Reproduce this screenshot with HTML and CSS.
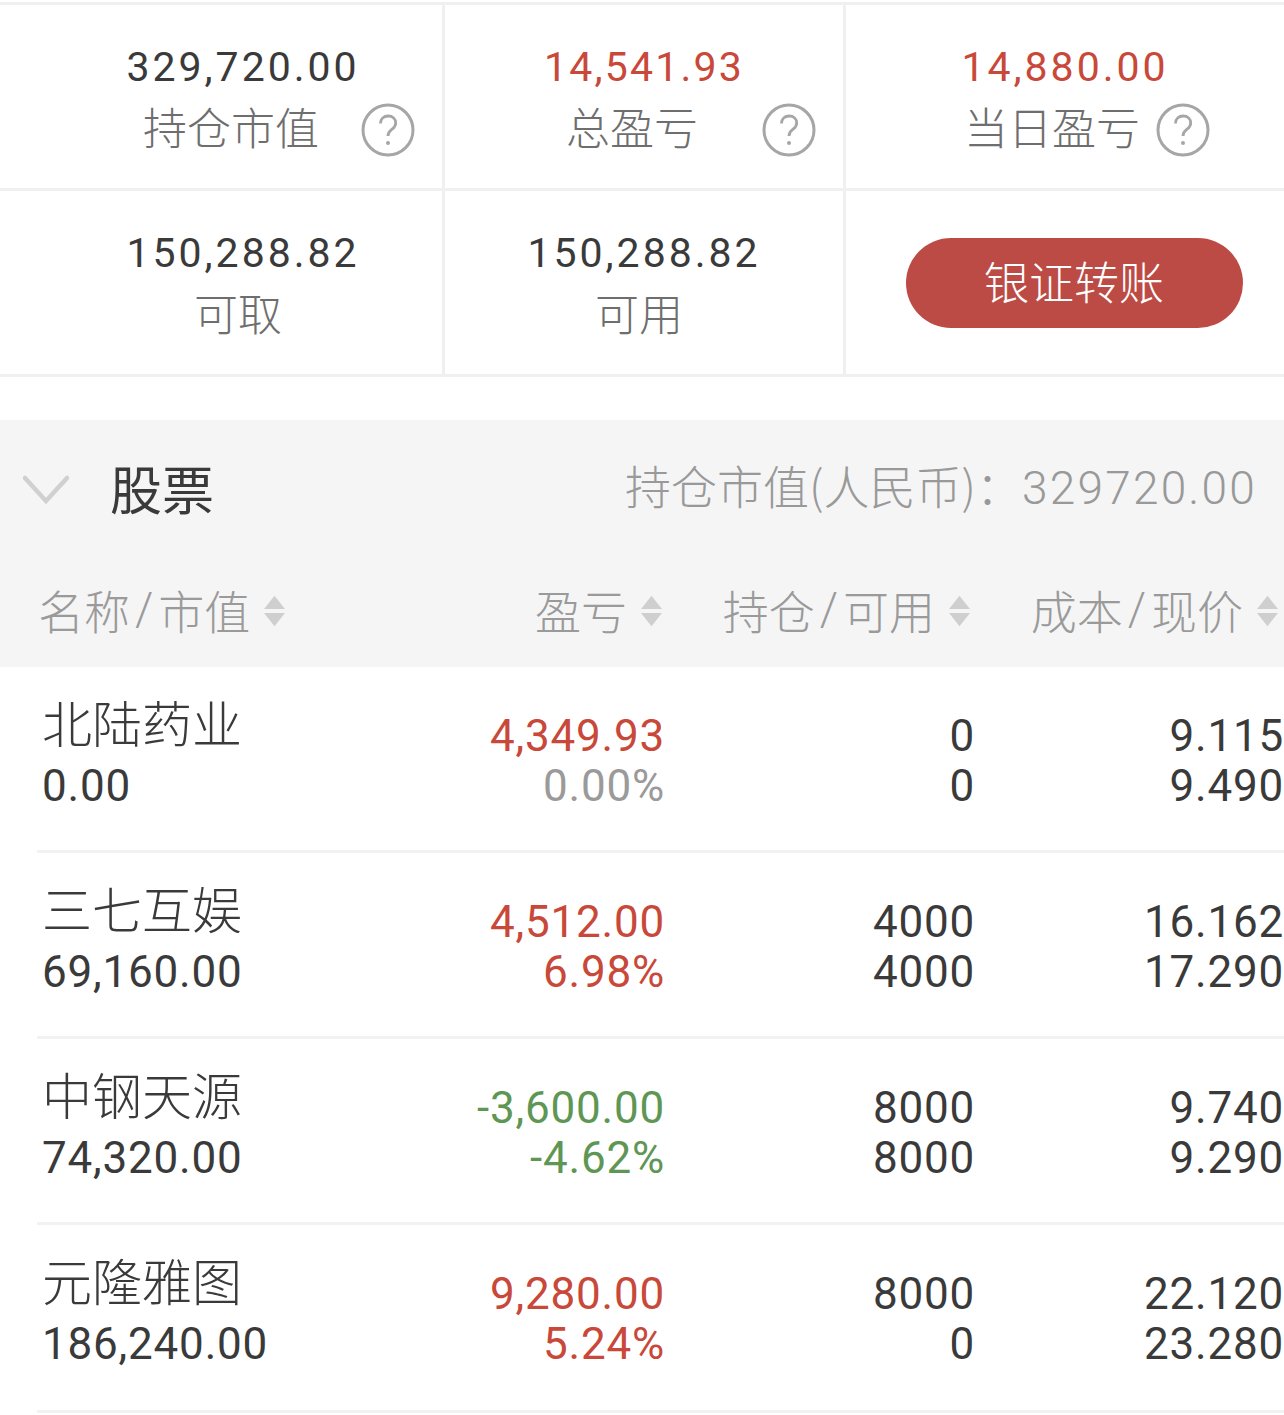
FILE: index.html
```html
<!DOCTYPE html>
<html lang="zh-CN">
<head>
<meta charset="utf-8">
<title>持仓</title>
<link rel="stylesheet" href="styles.css">
</head>
<body>
<svg class="defs" width="0" height="0" aria-hidden="true">
  <symbol id="help" viewBox="0 0 54 54">
    <circle cx="27" cy="27" r="25" fill="none" stroke="#a6a6a6" stroke-width="3"/>
    <path d="M19.500 20.500c0-4.500 3.300-7.500 7.700-7.500s7.500 2.900 7.500 6.900c0 3-1.500 4.700-3.900 6.500-2.400 1.800-3.800 3.300-3.800 6.600" fill="none" stroke="#a6a6a6" stroke-width="2.800"/>
    <circle cx="27" cy="40" r="2" fill="#a6a6a6"/>
  </symbol>
  <symbol id="sort" viewBox="0 0 22 32">
    <path d="M11 0 22 14H0zM0 18h22L11 32z" fill="#cfcfcf"/>
  </symbol>
</svg>

<section class="summary">
  <div class="cell first">
    <div class="amount">329,720.00</div>
    <div class="caption shift-a"><span>持仓市值</span><svg class="help gap-wide"><use href="#help"/></svg></div>
  </div>
  <div class="cell">
    <div class="amount tight up">14,541.93</div>
    <div class="caption shift-b"><span>总盈亏</span><svg class="help gap-wider"><use href="#help"/></svg></div>
  </div>
  <div class="cell">
    <div class="amount up">14,880.00</div>
    <div class="caption shift-c"><span>当日盈亏</span><svg class="help gap-tight"><use href="#help"/></svg></div>
  </div>
  <div class="cell first">
    <div class="amount">150,288.82</div>
    <div class="caption shift-d"><span>可取</span></div>
  </div>
  <div class="cell">
    <div class="amount">150,288.82</div>
    <div class="caption shift-e"><span>可用</span></div>
  </div>
  <div class="cell action">
    <button class="transfer" type="button">银证转账</button>
  </div>
</section>

<section class="holdings">
  <header class="group">
    <svg class="chevron" viewBox="0 0 46 30"><path d="M2 3 23 26 44 3" fill="none" stroke="#d0d0d0" stroke-width="4.500" stroke-linecap="round"/></svg>
    <h2 class="group-name">股票</h2>
    <div class="group-total">持仓市值(人民币)：<span class="group-number">329720.00</span></div>
  </header>
  <div class="columns">
    <div class="col-name">名称<i>/</i>市值<svg class="sort"><use href="#sort"/></svg></div>
    <div class="col-pnl">盈亏<svg class="sort"><use href="#sort"/></svg></div>
    <div class="col-qty">持仓<i>/</i>可用<svg class="sort"><use href="#sort"/></svg></div>
    <div class="col-cost">成本<i>/</i>现价<svg class="sort"><use href="#sort"/></svg></div>
  </div>

  <div class="row">
    <div class="stock"><div class="stock-name">北陆药业</div><div class="num">0.00</div></div>
    <div class="pnl"><div class="num up">4,349.93</div><div class="num flat">0.00%</div></div>
    <div class="qty"><div class="num">0</div><div class="num">0</div></div>
    <div class="cost"><div class="num">9.115</div><div class="num">9.490</div></div>
  </div>
  <div class="row">
    <div class="stock"><div class="stock-name">三七互娱</div><div class="num">69,160.00</div></div>
    <div class="pnl"><div class="num up">4,512.00</div><div class="num up">6.98%</div></div>
    <div class="qty"><div class="num">4000</div><div class="num">4000</div></div>
    <div class="cost"><div class="num">16.162</div><div class="num">17.290</div></div>
  </div>
  <div class="row">
    <div class="stock"><div class="stock-name">中钢天源</div><div class="num">74,320.00</div></div>
    <div class="pnl"><div class="num down">-3,600.00</div><div class="num down">-4.62%</div></div>
    <div class="qty"><div class="num">8000</div><div class="num">8000</div></div>
    <div class="cost"><div class="num">9.740</div><div class="num">9.290</div></div>
  </div>
  <div class="row">
    <div class="stock"><div class="stock-name">元隆雅图</div><div class="num">186,240.00</div></div>
    <div class="pnl"><div class="num up">9,280.00</div><div class="num up">5.24%</div></div>
    <div class="qty"><div class="num">8000</div><div class="num">0</div></div>
    <div class="cost"><div class="num">22.120</div><div class="num">23.280</div></div>
  </div>
</section>
</body>
</html>
```

FILE: styles.css
```css
* { box-sizing: border-box; }

html, body {
  margin: 0;
  background: #fff;
}

body {
  width: 1284px;
  height: 1415px;
  overflow: hidden;
  padding-top: 2px;
  font-family: "Noto Sans CJK SC", Roboto, sans-serif;
  font-weight: 300;
  color: #3a3a3a;
}

.defs { position: absolute; }

/* account summary */
.summary {
  display: grid;
  grid-template-columns: 445px 401px 438px;
  grid-auto-rows: 186px;
  border-top: 3px solid #f0f0f0;
}

.cell {
  display: flex;
  flex-direction: column;
  align-items: center;
  padding-top: 35px;
  border-right: 3px solid #f0f0f0;
  border-bottom: 3px solid #f0f0f0;
}

.cell.first { padding-left: 44px; }
.cell:nth-child(3n) { border-right: 0; }

.amount {
  font-family: Roboto, sans-serif;
  font-weight: 400;
  font-size: 41px;
  line-height: 54px;
  margin-bottom: 1px;
  letter-spacing: 3px;
  color: #3a3a3a;
}

.amount.tight { letter-spacing: 2.200px; }
.amount.up, .up { color: #c8483a; }
.down { color: #5e9654; }
.flat { color: #9a9a9a; }

.caption {
  display: flex;
  align-items: center;
  height: 70px;
  font-size: 44px;
  line-height: 60px;
  color: #6e6e6e;
}

.caption span { margin-bottom: 8px; }

.shift-a { margin-left: 72px; }
.shift-b { margin-left: 94px; }
.shift-c { margin-left: 44px; }
.shift-d { margin-left: -10px; }
.shift-e { margin-left: -10px; }

.help { width: 54px; height: 54px; flex: none; margin-top: -1px; }
.gap-wide { margin-left: 42px; }
.gap-wider { margin-left: 64px; }
.gap-tight { margin-left: 16px; }

.action {
  justify-content: center;
  padding: 0 0 0 18px;
}

.transfer {
  width: 337px;
  height: 90px;
  padding: 0 0 4px;
  border: 0;
  border-radius: 45px;
  background: #bd4b45;
  color: #fff;
  font: 300 45px/86px "Noto Sans CJK SC", sans-serif;
}

/* holdings list */
.holdings { margin-top: 43px; }

.group {
  display: flex;
  align-items: center;
  height: 140px;
  background: #f5f5f5;
  padding: 0 27px 0 23px;
}

.chevron { width: 46px; height: 30px; flex: none; }

.group-name {
  margin: 0 0 6px 41px;
  font-size: 52px;
  font-weight: 400;
  color: #3a3a3a;
}

.group-total {
  margin: 0 0 12px auto;
  font-size: 46px;
  color: #999;
}

.group-number {
  font-family: Roboto, sans-serif;
  font-size: 46px;
  font-weight: 300;
  letter-spacing: 2.200px;
}

.columns {
  display: grid;
  grid-template-columns: 341px 324px 310px 309px;
  height: 107px;
  padding-bottom: 10px;
  align-items: center;
  background: #f5f5f5;
  font-size: 46px;
  color: #9a9a9a;
}

.columns > div {
  display: flex;
  align-items: center;
  white-space: nowrap;
}

.col-name { padding-left: 38px; }
.col-pnl, .col-qty, .col-cost { justify-content: flex-end; }
.col-pnl { padding-right: 3px; }
.col-qty { padding-right: 5px; }
.col-cost { padding-right: 6px; }

.columns i {
  font-family: Roboto, sans-serif;
  font-style: normal;
  font-weight: 300;
  margin: 0 5px;
}

.sort { width: 21px; height: 32px; margin: 5px 0 0 14px; flex: none; }

.row {
  display: grid;
  grid-template-columns: 341px 324px 310px 309px;
  height: 186px;
  padding-top: 29px;
  position: relative;
}

.row:last-child { height: 188px; }

.row::after {
  content: "";
  position: absolute;
  left: 37px;
  right: 0;
  bottom: 0;
  height: 3px;
  background: #f2f2f2;
}

.stock { padding-left: 42px; }
.pnl, .qty, .cost { text-align: right; padding-top: 15px; }

.stock-name {
  font-size: 50px;
  line-height: 50px;
  margin-bottom: 15px;
  white-space: nowrap;
  color: #3a3a3a;
}

.num {
  font-family: Roboto, sans-serif;
  font-weight: 400;
  font-size: 44px;
  line-height: 50px;
  letter-spacing: 0.800px;
  white-space: nowrap;
}
```
